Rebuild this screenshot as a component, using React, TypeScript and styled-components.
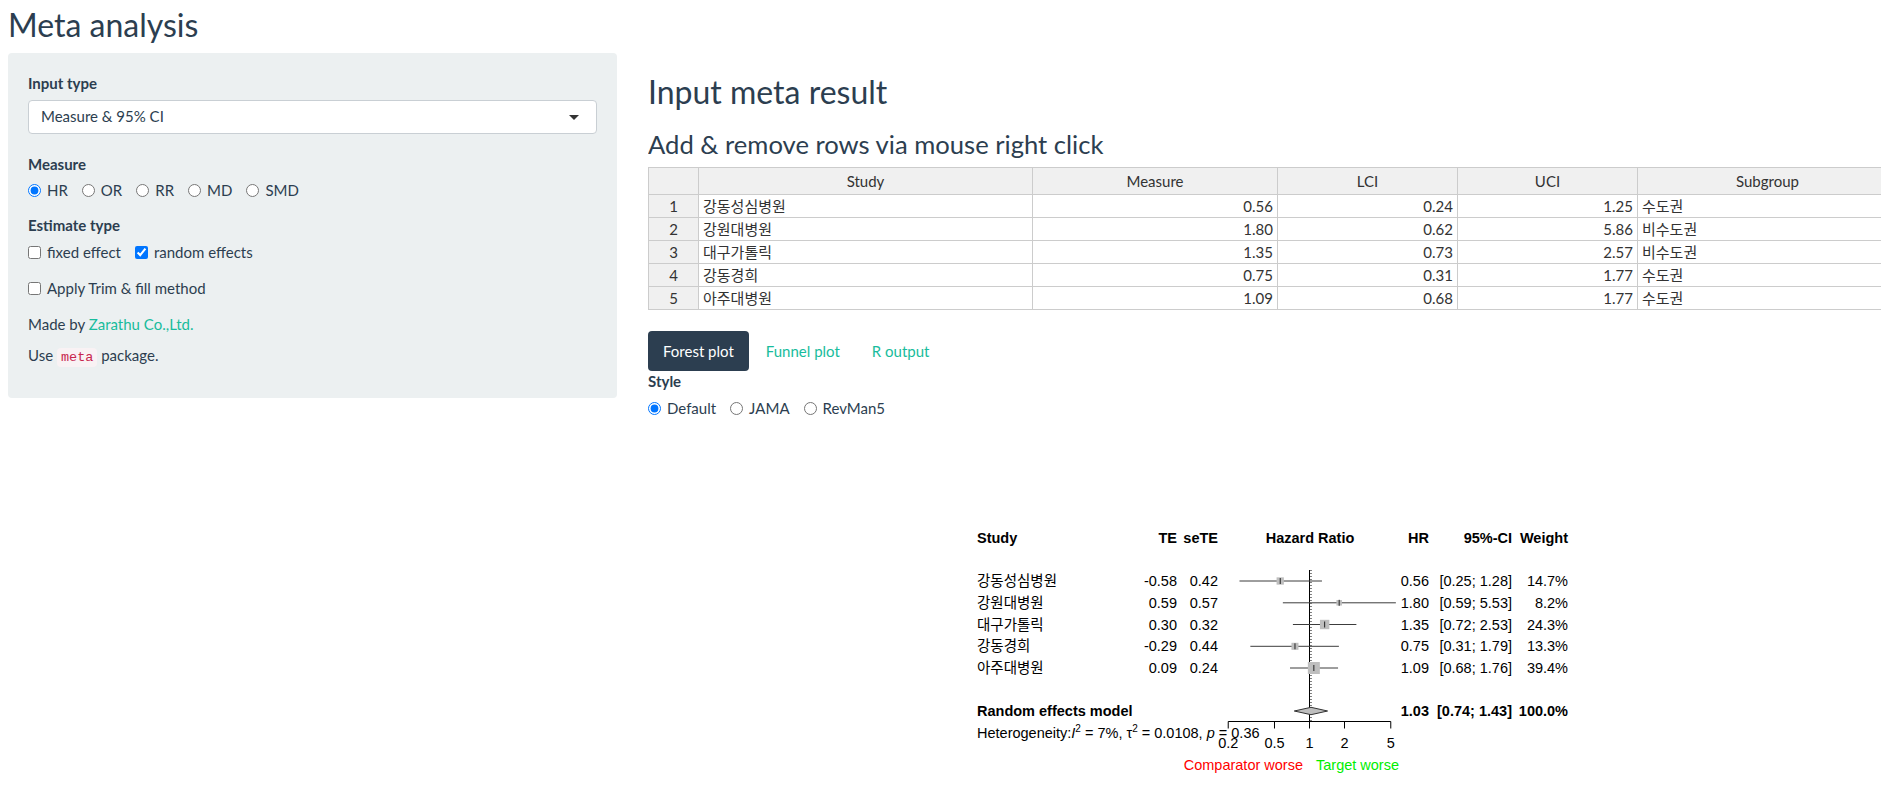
import React from "react";
import styled, { createGlobalStyle } from "styled-components";

const GlobalStyle = createGlobalStyle`
  html, body {
    margin: 0;
    padding: 0;
    overflow: hidden;
    background: #ffffff;
  }
  body {
    font-family: Lato, "Noto Sans CJK KR", sans-serif;
    font-size: 15px;
    line-height: 1.42857;
    color: #2c3e50;
  }
  * { box-sizing: border-box; }
`;

const Page = styled.div`
  padding-left: 8px;
  width: 1881px;
`;

const Title = styled.h2`
  margin: 7px 0 10.5px;
  font-size: 32px;
  font-weight: 400;
  line-height: 1.1;
`;

const Layout = styled.div`
  display: flex;
  align-items: flex-start;
  gap: 31px;
`;

const Sidebar = styled.div`
  flex: none;
  width: 609px;
  background: #ecf0f1;
  border-radius: 4px;
  padding: 20px 20px 19px;
`;

const FormGroup = styled.div<{ $mb?: number; $mt?: number }>`
  margin-top: ${(p) => p.$mt ?? 0}px;
  margin-bottom: ${(p) => p.$mb ?? 0}px;
`;

const FieldLabel = styled.div<{ $mb?: number }>`
  font-weight: 700;
  line-height: 21px;
  margin-bottom: ${(p) => p.$mb ?? 6}px;
`;

const SelectBox = styled.div`
  position: relative;
  height: 34px;
  background: #ffffff;
  border: 1px solid #c9cfd4;
  border-radius: 4px;
  padding: 0 12px;
  display: flex;
  align-items: center;
  color: #2c3e50;
`;

const Caret = styled.span`
  position: absolute;
  right: 17px;
  top: 50%;
  margin-top: -2px;
  width: 0;
  height: 0;
  border-style: solid;
  border-width: 5px 5px 0 5px;
  border-color: #333 transparent transparent transparent;
`;

const OptionRow = styled.div<{ $gap?: number }>`
  display: flex;
  align-items: center;
  gap: ${(p) => p.$gap ?? 14}px;
  line-height: 21px;
`;

const Option = styled.label`
  display: inline-flex;
  align-items: center;
  cursor: pointer;
  white-space: nowrap;
`;

const Choice = styled.input`
  width: 13px;
  height: 13px;
  margin: 0 6px 0 0;
  flex: none;
`;

const Para = styled.p<{ $mb?: number }>`
  margin: 0 0 ${(p) => p.$mb ?? 10.5}px;
  line-height: 21px;
`;

const Link = styled.a`
  color: #18bc9c;
  text-decoration: none;
`;

const Code = styled.code`
  font-family: "Liberation Mono", monospace;
  font-size: 13.5px;
  color: #c7254e;
  background: #f9f2f4;
  border-radius: 4px;
  padding: 2px 4px;
`;

const Main = styled.div`
  flex: 1;
  min-width: 0;
  overflow: hidden;
`;

const Heading2 = styled.h2`
  margin: 21px 0 10.5px;
  font-size: 32px;
  font-weight: 400;
  line-height: 1.1;
`;

const Heading3 = styled.h3`
  margin: 21px 0 9px;
  font-size: 25.6px;
  font-weight: 400;
  line-height: 28.6px;
`;

const DataTable = styled.table`
  border-collapse: collapse;
  table-layout: fixed;
  width: 1249px;
  font-size: 15px;
  color: #333;
`;

const HeadCell = styled.th`
  height: 27px;
  padding: 0 4px;
  background: #f0f0f0;
  border: 1px solid #ccc;
  font-weight: 400;
  text-align: center;
  line-height: 21px;
`;

const RowHead = styled.td`
  height: 23px;
  padding: 0 4px;
  background: #f0f0f0;
  border: 1px solid #ccc;
  text-align: center;
  line-height: 21px;
`;

const Cell = styled.td<{ $align?: "left" | "right" }>`
  height: 23px;
  padding: 0 4px;
  border: 1px solid #ccc;
  text-align: ${(p) => p.$align ?? "left"};
  line-height: 21px;
  white-space: nowrap;
  overflow: hidden;
`;

const Nav = styled.div`
  display: flex;
  gap: 2px;
  margin-top: 21px;
`;

const Pill = styled.a<{ $active?: boolean }>`
  display: block;
  padding: 10px 15px;
  line-height: 20px;
  border-radius: 4px;
  text-decoration: none;
  background: ${(p) => (p.$active ? "#2c3e50" : "transparent")};
  color: ${(p) => (p.$active ? "#ffffff" : "#18bc9c")};
`;

const PlotSvg = styled.svg`
  display: block;
  margin-top: 1px;
  font-family: "Liberation Sans", "Noto Sans CJK KR", sans-serif;
  font-size: 14.5px;
`;

const rows = [
  { no: 1, study: "강동성심병원", m: "0.56", l: "0.24", u: "1.25", g: "수도권" },
  { no: 2, study: "강원대병원", m: "1.80", l: "0.62", u: "5.86", g: "비수도권" },
  { no: 3, study: "대구가톨릭", m: "1.35", l: "0.73", u: "2.57", g: "비수도권" },
  { no: 4, study: "강동경희", m: "0.75", l: "0.31", u: "1.77", g: "수도권" },
  { no: 5, study: "아주대병원", m: "1.09", l: "0.68", u: "1.77", g: "수도권" },
];

const studies = [
  { name: "강동성심병원", te: "-0.58", se: "0.42", hr: 0.56, lo: 0.25, hi: 1.28, ci: "[0.25; 1.28]", w: "14.7%", size: 7.3 },
  { name: "강원대병원", te: "0.59", se: "0.57", hr: 1.8, lo: 0.59, hi: 5.53, ci: "[0.59; 5.53]", w: "8.2%", size: 5.5 },
  { name: "대구가톨릭", te: "0.30", se: "0.32", hr: 1.35, lo: 0.72, hi: 2.53, ci: "[0.72; 2.53]", w: "24.3%", size: 9.4 },
  { name: "강동경희", te: "-0.29", se: "0.44", hr: 0.75, lo: 0.31, hi: 1.79, ci: "[0.31; 1.79]", w: "13.3%", size: 7.0 },
  { name: "아주대병원", te: "0.09", se: "0.24", hr: 1.09, lo: 0.68, hi: 1.76, ci: "[0.68; 1.76]", w: "39.4%", size: 12 },
];

const rowY = [581, 602.8, 624.5, 646.3, 668];
const xs = (v: number) => 1309.5 + 50.5 * Math.log(v);

const ForestPlot: React.FC = () => {
  const headY = 543;
  const reY = 711;
  const axisY = 721.5;
  const ticks = [0.2, 0.5, 1, 2, 5];
  return (
    <PlotSvg width={1233} height={384} viewBox="648 420 1233 384">
      <g fontWeight={700}>
        <text x={977} y={headY}>Study</text>
        <text x={1177} y={headY} textAnchor="end">TE</text>
        <text x={1218} y={headY} textAnchor="end">seTE</text>
        <text x={1310} y={headY} textAnchor="middle">Hazard Ratio</text>
        <text x={1429} y={headY} textAnchor="end">HR</text>
        <text x={1512} y={headY} textAnchor="end">95%-CI</text>
        <text x={1568} y={headY} textAnchor="end">Weight</text>
      </g>
      <line x1={1309.5} y1={570} x2={1309.5} y2={axisY} stroke="#000" strokeWidth={1} />
      <line x1={xs(1.03)} y1={570} x2={xs(1.03)} y2={axisY} stroke="#000" strokeWidth={1} strokeDasharray="1 2" />
      {studies.map((s, i) => {
        const y = rowY[i];
        const cx = xs(s.hr);
        return (
          <g key={s.name}>
            <text x={977} y={y + 5}>{s.name}</text>
            <text x={1177} y={y + 5} textAnchor="end">{s.te}</text>
            <text x={1218} y={y + 5} textAnchor="end">{s.se}</text>
            <line x1={xs(s.lo)} y1={y} x2={xs(s.hi)} y2={y} stroke="#3c3c3c" strokeWidth={1} />
            <rect x={cx - s.size / 2} y={y - s.size / 2} width={s.size} height={s.size} fill="#bebebe" />
            <line x1={cx} y1={y - 3} x2={cx} y2={y + 3} stroke="#222" strokeWidth={1} />
            <text x={1429} y={y + 5} textAnchor="end">{s.hr.toFixed(2)}</text>
            <text x={1512} y={y + 5} textAnchor="end">{s.ci}</text>
            <text x={1568} y={y + 5} textAnchor="end">{s.w}</text>
          </g>
        );
      })}
      <g fontWeight={700}>
        <text x={977} y={reY + 5}>Random effects model</text>
        <text x={1429} y={reY + 5} textAnchor="end">1.03</text>
        <text x={1512} y={reY + 5} textAnchor="end">[0.74; 1.43]</text>
        <text x={1568} y={reY + 5} textAnchor="end">100.0%</text>
      </g>
      <polygon
        points={`${xs(0.74)},${reY} ${xs(1.03)},${reY - 3.7} ${xs(1.43)},${reY} ${xs(1.03)},${reY + 3.7}`}
        fill="#bebebe"
        stroke="#333"
        strokeWidth={1}
      />
      <text x={977} y={738}>
        Heterogeneity:<tspan fontStyle="italic">I</tspan>
        <tspan fontSize={10} dy={-6}>2</tspan>
        <tspan dy={6}> = 7%, τ</tspan>
        <tspan fontSize={10} dy={-6}>2</tspan>
        <tspan dy={6}> = 0.0108, </tspan>
        <tspan fontStyle="italic">p</tspan>
        <tspan> = 0.36</tspan>
      </text>
      <line x1={xs(0.2)} y1={axisY} x2={xs(5)} y2={axisY} stroke="#000" strokeWidth={1} />
      {ticks.map((t) => (
        <g key={t}>
          <line x1={xs(t)} y1={axisY} x2={xs(t)} y2={728.5} stroke="#000" strokeWidth={1} />
          <text x={xs(t)} y={748} textAnchor="middle">{t}</text>
        </g>
      ))}
      <text x={1303} y={770} textAnchor="end" fill="#ff0000">Comparator worse</text>
      <text x={1316} y={770} fill="#00ee00">Target worse</text>
    </PlotSvg>
  );
};

export default function App() {
  return (
    <Page>
      <GlobalStyle />
      <Title>Meta analysis</Title>
      <Layout>
        <Sidebar>
          <FormGroup $mb={20}>
            <FieldLabel>Input type</FieldLabel>
            <SelectBox>
              Measure &amp; 95% CI
              <Caret />
            </SelectBox>
          </FormGroup>
          <FormGroup $mb={14}>
            <FieldLabel $mb={5}>Measure</FieldLabel>
            <OptionRow>
              {["HR", "OR", "RR", "MD", "SMD"].map((m) => (
                <Option key={m}>
                  <Choice type="radio" name="measure" defaultChecked={m === "HR"} />
                  {m}
                </Option>
              ))}
            </OptionRow>
          </FormGroup>
          <FormGroup $mb={15}>
            <FieldLabel>Estimate type</FieldLabel>
            <OptionRow>
              <Option>
                <Choice type="checkbox" />
                fixed effect
              </Option>
              <Option>
                <Choice type="checkbox" defaultChecked />
                random effects
              </Option>
            </OptionRow>
          </FormGroup>
          <FormGroup $mb={15}>
            <OptionRow>
              <Option>
                <Choice type="checkbox" />
                Apply Trim &amp; fill method
              </Option>
            </OptionRow>
          </FormGroup>
          <Para>
            Made by <Link href="#">Zarathu Co.,Ltd.</Link>
          </Para>
          <Para>
            Use <Code>meta</Code> package.
          </Para>
        </Sidebar>
        <Main>
          <Heading2>Input meta result</Heading2>
          <Heading3>Add &amp; remove rows via mouse right click</Heading3>
          <DataTable>
            <colgroup>
              <col style={{ width: 50 }} />
              <col style={{ width: 334 }} />
              <col style={{ width: 245 }} />
              <col style={{ width: 180 }} />
              <col style={{ width: 180 }} />
              <col style={{ width: 260 }} />
            </colgroup>
            <thead>
              <tr>
                <HeadCell />
                <HeadCell>Study</HeadCell>
                <HeadCell>Measure</HeadCell>
                <HeadCell>LCI</HeadCell>
                <HeadCell>UCI</HeadCell>
                <HeadCell>Subgroup</HeadCell>
              </tr>
            </thead>
            <tbody>
              {rows.map((r) => (
                <tr key={r.no}>
                  <RowHead>{r.no}</RowHead>
                  <Cell>{r.study}</Cell>
                  <Cell $align="right">{r.m}</Cell>
                  <Cell $align="right">{r.l}</Cell>
                  <Cell $align="right">{r.u}</Cell>
                  <Cell>{r.g}</Cell>
                </tr>
              ))}
            </tbody>
          </DataTable>
          <Nav>
            <Pill $active href="#">Forest plot</Pill>
            <Pill href="#">Funnel plot</Pill>
            <Pill href="#">R output</Pill>
          </Nav>
          <FieldLabel $mb={6}>Style</FieldLabel>
          <OptionRow>
            {["Default", "JAMA", "RevMan5"].map((s) => (
              <Option key={s}>
                <Choice type="radio" name="style" defaultChecked={s === "Default"} />
                {s}
              </Option>
            ))}
          </OptionRow>
          <ForestPlot />
        </Main>
      </Layout>
    </Page>
  );
}
